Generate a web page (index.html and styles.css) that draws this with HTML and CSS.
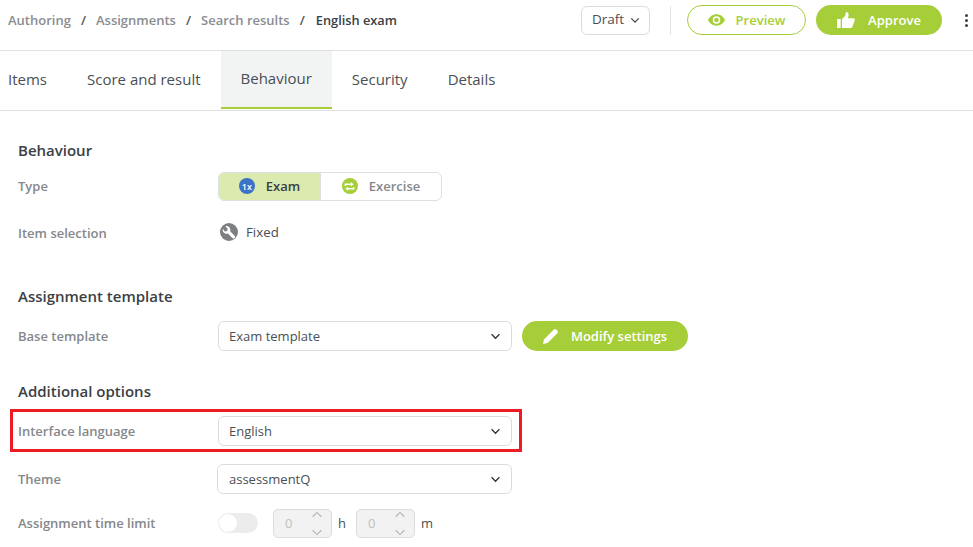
FILE: index.html
```html
<!DOCTYPE html>
<html lang="en">
<head>
<meta charset="utf-8">
<title>English exam</title>
<link rel="stylesheet" href="styles.css">
</head>
<body>
<header class="topbar">
  <nav class="crumbs">
    <span class="crumb">Authoring</span><span class="sep">/</span>
    <span class="crumb">Assignments</span><span class="sep">/</span>
    <span class="crumb">Search results</span><span class="sep">/</span>
    <span class="crumb-current">English exam</span>
  </nav>
  <div class="actions">
    <div class="status">Draft
      <svg class="chev-small" viewBox="0 0 12 8"><path d="M1.500 1.500 6 6l4.500-4.500" fill="none" stroke="#444" stroke-width="1.500"/></svg>
    </div>
    <div class="divider"></div>
    <div class="btn btn-outline">
      <svg class="ico-eye" viewBox="0 0 24 16"><path fill="#a6ce39" d="M12 0C6.500 0 2.200 3.300 0 8c2.200 4.700 6.500 8 12 8s9.800-3.300 12-8c-2.200-4.700-6.500-8-12-8Zm0 13.300A5.300 5.300 0 1 1 12 2.700a5.300 5.300 0 0 1 0 10.600Zm0-8.500a3.200 3.200 0 1 0 0 6.400 3.200 3.200 0 0 0 0-6.400Z"/></svg>
      Preview
    </div>
    <div class="btn btn-solid btn-approve">
      <svg class="ico-thumb" viewBox="0 0 20 18"><path fill="#fff" d="M0 8h4v10H0zM5.500 8 9 4.500 10 0c1.800 0 3 1.200 3 3 0 1.300-.4 2.500-1 4h6.200c1 0 1.800.8 1.800 1.800 0 .3 0 .5-.2.800l-2.600 7c-.3.800-1 1.400-1.900 1.400H5.500z"/></svg>
      Approve
    </div>
    <div class="kebab"><i></i><i></i><i></i></div>
  </div>
</header>

<nav class="tabs">
  <div class="tab">Items</div>
  <div class="tab">Score and result</div>
  <div class="tab tab-active">Behaviour</div>
  <div class="tab">Security</div>
  <div class="tab">Details</div>
</nav>

<main class="content">
  <h2 class="heading">Behaviour</h2>
  <div class="row row-type">
    <div class="label">Type</div>
    <div class="segment">
      <div class="seg seg-on">
        <span class="badge badge-blue">1x</span>Exam
      </div>
      <div class="seg">
        <span class="badge badge-green">
          <svg viewBox="0 0 12 12" class="ico-repeat"><path d="M1.500 5.500V3.500H8M10.500 6.500V8.500H4" fill="none" stroke="#fff" stroke-width="1.600"/><path d="M7.500 1 10.500 3.500 7.500 6zM4.500 6 1.500 8.500 4.500 11z" fill="#fff"/></svg>
        </span>Exercise
      </div>
    </div>
  </div>
  <div class="row row-item">
    <div class="label">Item selection</div>
    <div class="fixed">
      <span class="wrench">
        <svg viewBox="0 0 18 18"><path fill="#fff" d="M12.300 2.800a4 4 0 0 0-4.900 5.100L3 12.300a1.600 1.600 0 0 0 2.300 2.300l4.400-4.400a4 4 0 0 0 5.100-4.900l-2.500 2.400-2.300-.6-.6-2.300z" transform="rotate(-90 9 9)"/></svg>
      </span>
      Fixed
    </div>
  </div>

  <h2 class="heading heading-template">Assignment template</h2>
  <div class="row row-base">
    <div class="label">Base template</div>
    <div class="select">Exam template
      <svg class="chev" viewBox="0 0 12 8"><path d="M1.500 1.500 6 6l4.500-4.500" fill="none" stroke="#333" stroke-width="1.500"/></svg>
    </div>
    <div class="btn btn-solid btn-modify">
      <svg class="ico-pencil" viewBox="0 0 16 16"><path fill="#fff" d="M0 16l1-4.600L10.800 1.600c.7-.7 1.800-.7 2.500 0l1.100 1.100c.7.700.7 1.800 0 2.500L4.600 15z"/></svg>
      Modify settings
    </div>
  </div>

  <h2 class="heading heading-options">Additional options</h2>
  <div class="row row-lang">
    <div class="label">Interface language</div>
    <div class="select">English
      <svg class="chev" viewBox="0 0 12 8"><path d="M1.500 1.500 6 6l4.500-4.500" fill="none" stroke="#333" stroke-width="1.500"/></svg>
    </div>
    <div class="highlight"></div>
  </div>
  <div class="row row-theme">
    <div class="label">Theme</div>
    <div class="select select-theme">assessmentQ
      <svg class="chev" viewBox="0 0 12 8"><path d="M1.500 1.500 6 6l4.500-4.500" fill="none" stroke="#333" stroke-width="1.500"/></svg>
    </div>
  </div>
  <div class="row row-limit">
    <div class="label">Assignment time limit</div>
    <div class="toggle"><span class="knob"></span></div>
    <div class="spin">0
      <svg class="spin-arrows" viewBox="0 0 12 26"><path d="M1.500 6 6 1.500 10.500 6M1.500 20 6 24.500 10.500 20" fill="none" stroke="#b5b5b5" stroke-width="1.200"/></svg>
    </div>
    <span class="unit">h</span>
    <div class="spin">0
      <svg class="spin-arrows" viewBox="0 0 12 26"><path d="M1.500 6 6 1.500 10.500 6M1.500 20 6 24.500 10.500 20" fill="none" stroke="#b5b5b5" stroke-width="1.200"/></svg>
    </div>
    <span class="unit">m</span>
  </div>
</main>
</body>
</html>
```
FILE: styles.css
```css
* { box-sizing: border-box; }
html, body { margin: 0; height: 100%; }
body {
  font-family: "Open Sans", "Liberation Sans", sans-serif;
  font-size: 14px;
  color: #4a4f55;
  background: #fff;
  overflow: hidden;
}
.topbar {
  height: 51px;
  border-bottom: 1px solid #e0e0e0;
  display: flex;
  align-items: flex-start;
  justify-content: space-between;
  padding: 0 0 0 8px;
}
.crumbs {
  display: flex;
  align-items: center;
  height: 40px;
  font-size: 13px;
  font-weight: 600;
  color: #8a8d91;
}
.sep { margin: 0 10px; color: #555; font-weight: 600; }
.crumb-current { margin-left: 1px; font-size: 12.800px; color: #3b4045; }
.actions {
  display: flex;
  align-items: center;
  height: 40px;
  margin-right: 5px;
}
.status {
  width: 69px;
  height: 29px;
  border: 1px solid #dcdcdc;
  border-radius: 6px;
  display: flex;
  align-items: center;
  padding: 0 0 2px 10px;
  gap: 6px;
  font-size: 13.500px;
  color: #4a4f55;
}
.chev-small { width: 10px; height: 7px; margin-top: 2px; }
.divider { width: 1px; height: 29px; background: #e6e6e6; margin: 0 16px 0 20px; }
.btn {
  display: flex;
  align-items: center;
  justify-content: center;
  height: 30px;
  border-radius: 15px;
  font-size: 13px;
  font-weight: 600;
}
.btn-outline {
  width: 119px;
  border: 1px solid #a6ce39;
  color: #a6ce39;
  gap: 11px;
}
.btn-solid { background: #a6ce39; color: #fff; }
.btn-approve { width: 126px; margin-left: 10px; gap: 13px; }
.ico-eye { width: 17px; height: 12px; }
.ico-thumb { width: 18px; height: 16px; }
.kebab {
  display: flex;
  flex-direction: column;
  gap: 2px;
  width: 3px;
  margin-left: 23px;
}
.kebab i { width: 3px; height: 3px; background: #3b4045; border-radius: 50%; }
.tabs {
  height: 60px;
  border-bottom: 1px solid #e0e0e0;
  display: flex;
}
.tab {
  display: flex;
  align-items: center;
  height: 59px;
  padding: 0 20px 3px;
  font-size: 15px;
  color: #4a4f55;
}
.tab:first-child { padding-left: 8px; }
.tab-active {
  background: #f2f4f4;
  border-bottom: 2px solid #a6ce39;
  padding-bottom: 3px;
  margin-bottom: -1px;
  height: 58px;
}
.content { padding: 29px 0 0 18px; position: relative; }
.heading {
  margin: 0;
  font-size: 15px;
  line-height: 20px;
  font-weight: 600;
  color: #3b4045;
}
.heading-template { margin-top: 41px; }
.heading-options { margin-top: 30px; }
.row { display: flex; align-items: center; position: relative; }
.label {
  width: 200px;
  flex: none;
  font-size: 13px;
  font-weight: 600;
  color: #85888c;
}
.row-type { height: 30px; margin-top: 11px; }
.row-item { height: 24px; margin-top: 20px; }
.row-base { height: 30px; margin-top: 15px; }
.row-lang { height: 30px; margin-top: 15px; }
.row-theme { height: 30px; margin-top: 18px; }
.row-limit { height: 30px; margin-top: 14px; }
.segment {
  display: flex;
  width: 224px;
  height: 29px;
  border: 1px solid #e0e0e0;
  border-radius: 6px;
  overflow: hidden;
  font-size: 13px;
  font-weight: 600;
  color: #85888c;
}
.seg {
  flex: 1;
  display: flex;
  align-items: center;
  justify-content: center;
  gap: 11px;
}
.seg-on {
  flex: none;
  width: 102px;
  background: #dbebb0;
  color: #3b4045;
  border-right: 1px solid #e0e0e0;
}
.badge {
  width: 16px;
  height: 16px;
  border-radius: 50%;
  display: flex;
  align-items: center;
  justify-content: center;
  font-size: 9px;
  font-weight: 600;
  color: #fff;
}
.badge-blue { background: #3b73c9; }
.badge-green { background: #a6ce39; }
.ico-repeat { width: 11px; height: 11px; }
.fixed {
  display: flex;
  align-items: center;
  gap: 8px;
  font-size: 13.300px;
  margin-left: 2px;
  margin-top: -2px;
}
.wrench {
  width: 18px;
  height: 18px;
  border-radius: 50%;
  background: #7d7f83;
  display: flex;
}
.wrench svg { width: 18px; height: 18px; }
.select {
  width: 294px;
  height: 30px;
  border: 1px solid #dcdcdc;
  border-radius: 6px;
  display: flex;
  align-items: center;
  justify-content: space-between;
  padding: 0 10px;
  font-size: 13px;
  color: #4a4f55;
  background: #fff;
}
.select-theme { width: 295px; margin-left: -1px; padding-left: 11px; }
.chev { width: 11px; height: 7px; }
.btn-modify { width: 166px; margin-left: 10px; gap: 12px; }
.ico-pencil { width: 16px; height: 16px; }
.highlight {
  position: absolute;
  left: -8px;
  top: -7px;
  width: 512px;
  height: 43px;
  border: 3px solid #ed1c24;
  pointer-events: none;
}
.toggle {
  width: 40px;
  height: 20px;
  border-radius: 10px;
  background: #ececec;
  padding: 1px;
}
.knob {
  display: block;
  width: 18px;
  height: 18px;
  border-radius: 50%;
  background: #fff;
}
.spin {
  width: 59px;
  height: 29px;
  border: 1px solid #dcdcdc;
  border-radius: 5px;
  background: #f2f2f2;
  margin-left: 15px;
  display: flex;
  align-items: center;
  justify-content: space-between;
  padding: 0 8px 0 11px;
  font-size: 13px;
  color: #c0c0c0;
}
.spin + .unit + .spin { margin-left: 10px; }
.spin-arrows { width: 12px; height: 25px; }
.unit { margin-left: 6px; font-size: 13px; color: #4a4f55; width: 8px; }
```
